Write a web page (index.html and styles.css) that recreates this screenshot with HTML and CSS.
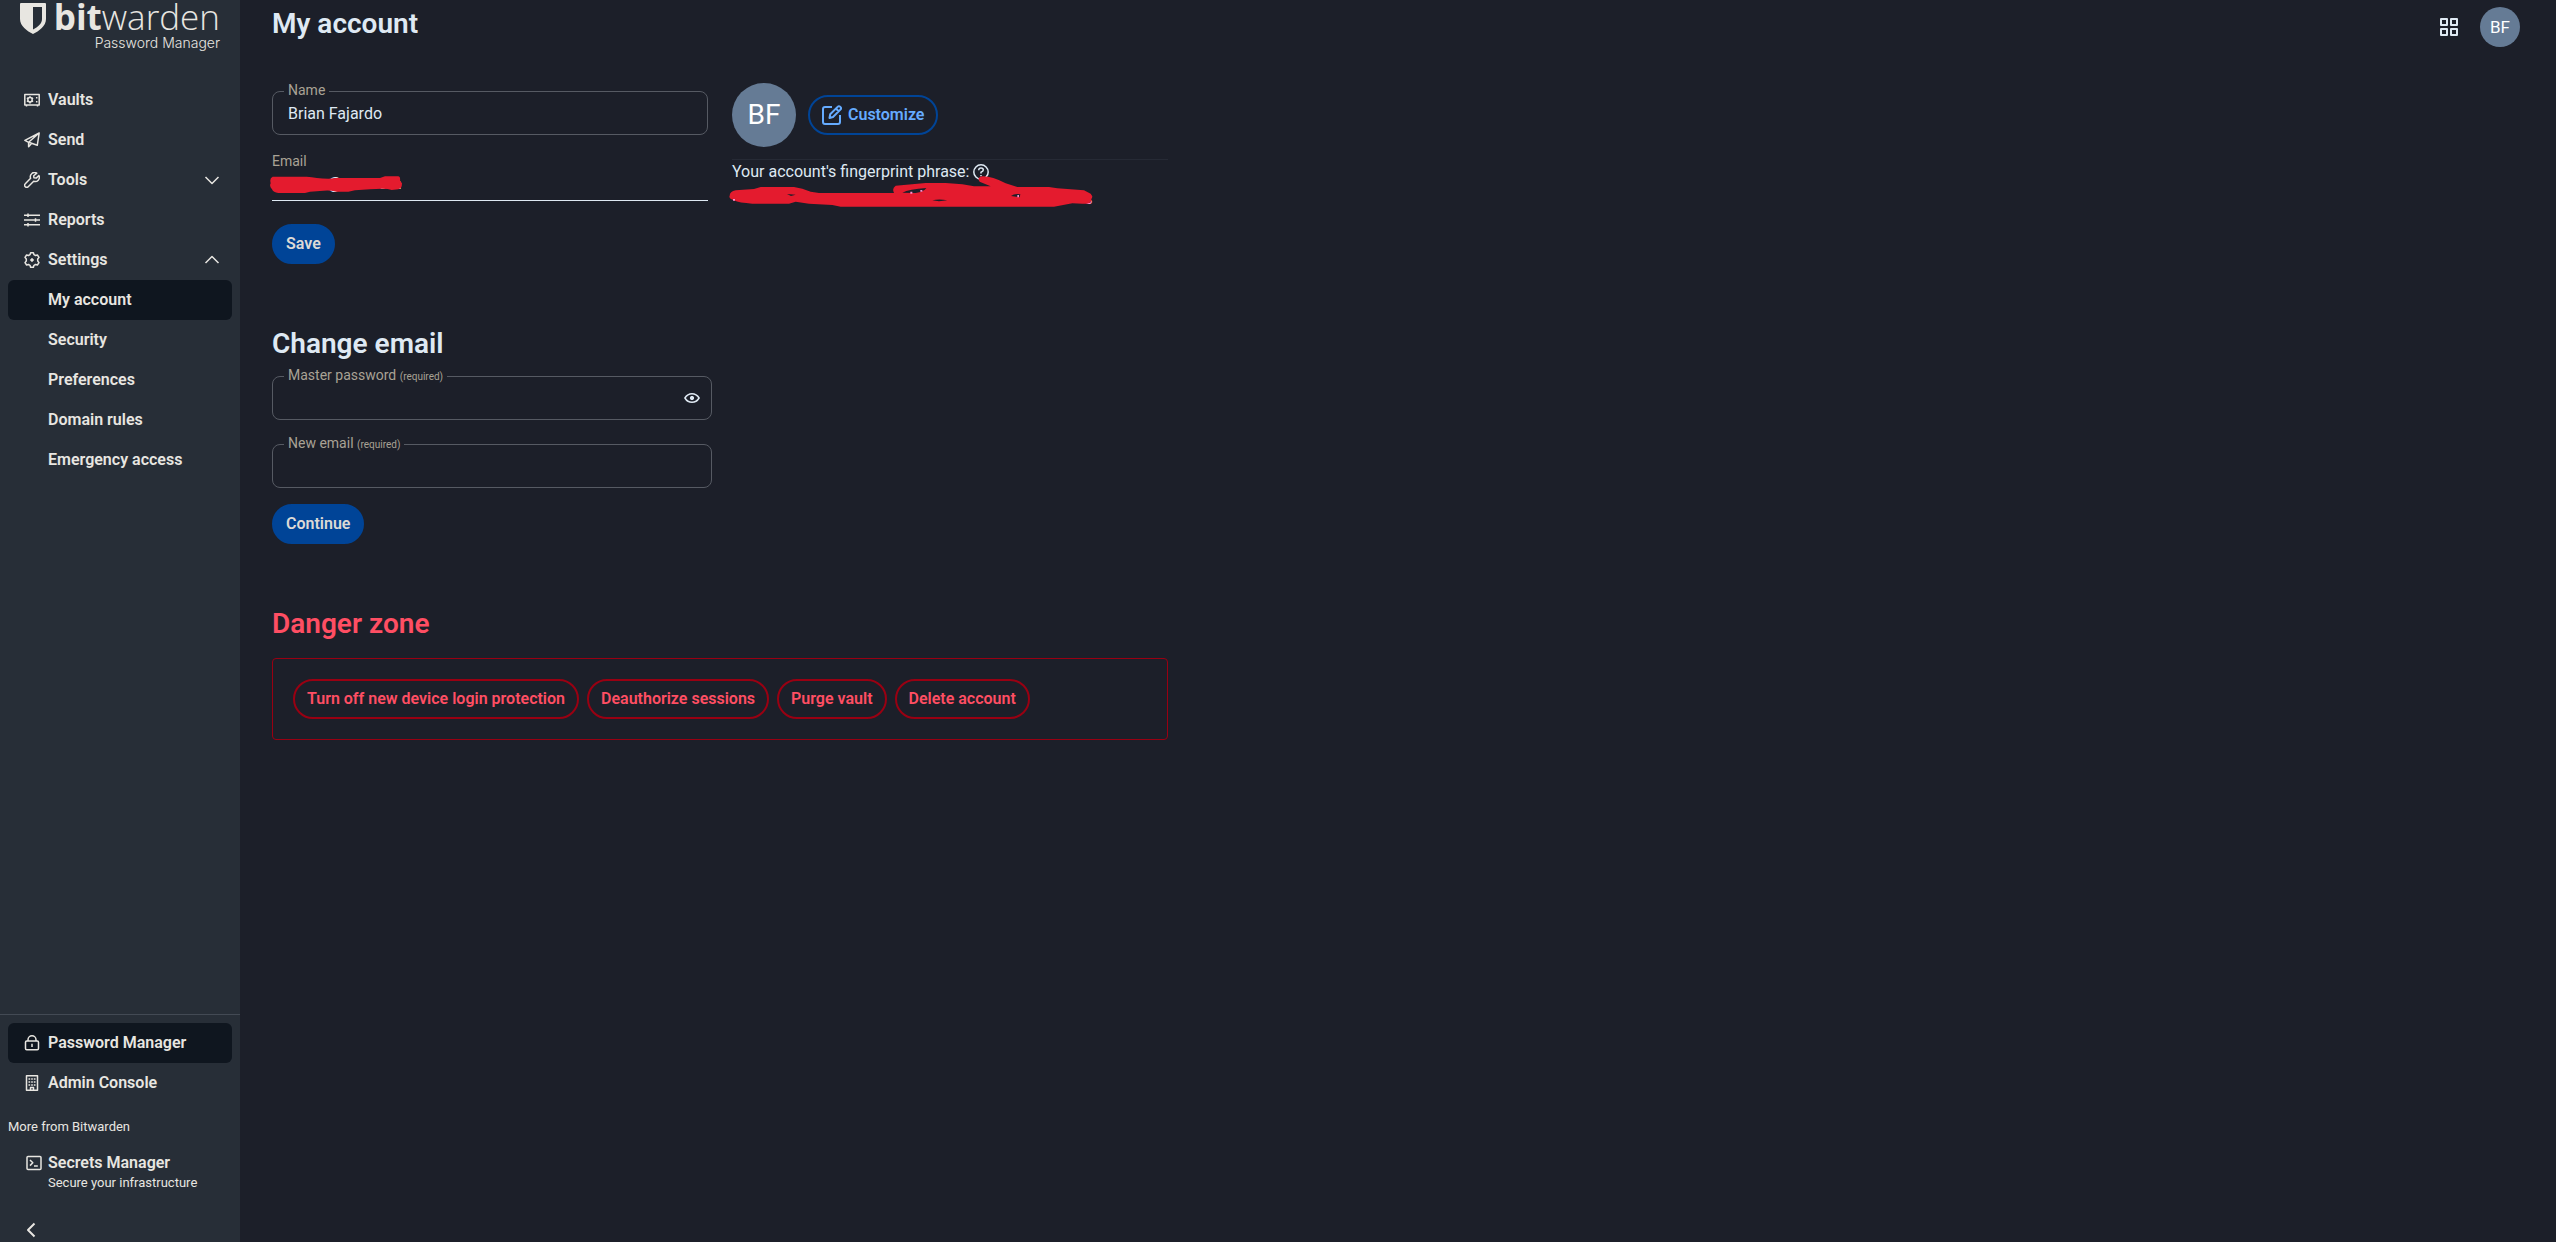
FILE: index.html
```html
<!DOCTYPE html>
<html lang="en">
<head>
  <meta charset="UTF-8">
  <meta name="viewport" content="width=device-width, initial-scale=1.0">
  <title>My account | Bitwarden Web vault</title>
  <link rel="stylesheet" href="styles.css">
</head>
<body>
  <div class="layout">
    <!-- Side navigation -->
    <nav class="sidebar" aria-label="Main">
      <a class="logo" href="#">
        <span class="logo-row">
          <svg class="logo-shield" viewBox="0 0 26 31" aria-hidden="true">
            <path fill-rule="evenodd" d="M1 0H25Q26 0 26 1V16C26 23 19 28 13 31C7 28 0 23 0 16V1Q0 0 1 0ZM13 4V26.500C18 24 22 20.500 22 16V4Z"/>
          </svg>
          <span class="logo-name"><b>bit</b>warden</span>
        </span>
        <span class="logo-product">Password Manager</span>
      </a>

      <ul class="nav-list">
        <li><a class="nav-item" href="#">
          <svg class="icon" viewBox="0 0 16 16" aria-hidden="true"><path d="M.8 2.500H15.200V13H.8ZM2.500 13V14.500M13.500 13V14.500M12.700 5V6.500M12.700 9V10.500"/><circle cx="6" cy="7.800" r="2.200"/><path d="M6 4.200V5.600M6 10V11.400M2.900 6L4.100 6.700M7.900 8.900L9.100 9.600M2.900 9.600L4.100 8.900M7.900 6.700L9.100 6"/></svg>
          Vaults</a></li>
        <li><a class="nav-item" href="#">
          <svg class="icon" viewBox="0 0 16 16" aria-hidden="true"><path d="M15.200 1L.9 8.400L4.600 10.300L13.300 13.200ZM15.200 1L4.600 10.300V14.800L7.500 11.400"/></svg>
          Send</a></li>
        <li><a class="nav-item" href="#">
          <svg class="icon" viewBox="0 0 16 16" aria-hidden="true"><path d="M12.800 1.200A4.200 4.200 0 0 0 6.600 6.200L1.300 11.700A2 2 0 0 0 4.200 14.700L9.700 9.300A4.200 4.200 0 0 0 14.900 3.500L12.200 6.100L9.900 5.800L9.700 3.800Z"/></svg>
          Tools
          <svg class="icon chevron" viewBox="0 0 16 16" aria-hidden="true"><path d="M1.500 5L8 11.500L14.500 5"/></svg></a></li>
        <li><a class="nav-item" href="#">
          <svg class="icon" viewBox="0 0 16 16" aria-hidden="true"><path d="M0 3.200H16M0 8H16M0 12.800H16M4 1.500V4.900M11.500 6.300V9.700M4 11.100V14.500"/></svg>
          Reports</a></li>
        <li><a class="nav-item" href="#">
          <svg class="icon" viewBox="0 0 16 16" aria-hidden="true"><path d="M6.600 .8H9.400L10 2.700L11.500 3.500L13.400 3L15 5.400L13.700 7V9L15 10.600L13.400 13L11.500 12.500L10 13.300L9.400 15.200H6.600L6 13.300L4.500 12.500L2.600 13L1 10.600L2.300 9V7L1 5.400L2.600 3L4.500 3.500L6 2.700Z"/><circle class="solid" cx="8" cy="8" r="1.300"/></svg>
          Settings
          <svg class="icon chevron" viewBox="0 0 16 16" aria-hidden="true"><path d="M1.500 11L8 4.500L14.500 11"/></svg></a>
          <ul class="nav-list">
            <li><a class="nav-item nav-child active" href="#" aria-current="page">My account</a></li>
            <li><a class="nav-item nav-child" href="#">Security</a></li>
            <li><a class="nav-item nav-child" href="#">Preferences</a></li>
            <li><a class="nav-item nav-child" href="#">Domain rules</a></li>
            <li><a class="nav-item nav-child" href="#">Emergency access</a></li>
          </ul>
        </li>
      </ul>

      <div class="sidebar-bottom">
        <ul class="nav-list">
          <li><a class="nav-item active" href="#">
            <svg class="icon" viewBox="0 0 16 16" aria-hidden="true"><rect x="1.500" y="6" width="13" height="8.800" rx="1.200"/><path d="M4 6V4.800A4 4 0 0 1 12 4.800V6M8 8.700V12"/></svg>
            Password Manager</a></li>
          <li><a class="nav-item" href="#">
            <svg class="icon" viewBox="0 0 16 16" aria-hidden="true"><path d="M2.500 .8H13.500V15.200H2.500ZM4.500 4H6.200M7.200 4H8.800M9.800 4H11.500M4.500 7H6.200M7.200 7H8.800M9.800 7H11.500M4.500 10H6.200M7.200 10H8.800M9.800 10H11.500M6.500 15V12.500H9.500V15"/></svg>
            Admin Console</a></li>
        </ul>
        <span class="more-title">More from Bitwarden</span>
        <a class="more-item" href="#">
          <svg class="icon" viewBox="0 0 16 16" aria-hidden="true"><rect x="1" y="1.500" width="14" height="13" rx="1"/><path d="M4 5L6.800 7.800L4 10.600M8 11H11.800"/></svg>
          <span class="more-text">
            <span class="more-name">Secrets Manager</span>
            <span class="more-desc">Secure your infrastructure</span>
          </span>
        </a>
        <button class="collapse" type="button" aria-label="Toggle side navigation">
          <svg class="icon" viewBox="0 0 16 16" aria-hidden="true"><path d="M10.500 1.500L4 8L10.500 14.500"/></svg>
        </button>
      </div>
    </nav>

    <!-- Page content -->
    <main class="content">
      <header class="page-header">
        <h1>My account</h1>
        <div class="header-actions">
          <button class="icon-button" type="button" aria-label="Switch products">
            <svg class="icon grid-icon" viewBox="0 0 18 18" aria-hidden="true"><path d="M1 1H7V7H1ZM11 1H17V7H11ZM1 11H7V17H1ZM11 11H17V17H11Z"/></svg>
          </button>
          <button class="avatar avatar-small" type="button">BF</button>
        </div>
      </header>

      <div class="page-body">
        <!-- Profile -->
        <form class="profile">
          <div class="profile-column profile-fields">
            <div class="field">
              <label for="name">Name</label>
              <input type="text" id="name" value="Brian Fajardo">
            </div>
            <div class="field-readonly">
              <label for="email">Email</label>
              <input type="text" id="email" value="&nbsp;&nbsp;&nbsp;&nbsp;&nbsp;&nbsp;&nbsp;&nbsp;&nbsp;&nbsp;&nbsp;&nbsp;&nbsp;&nbsp;@&nbsp;&nbsp;&nbsp;&nbsp;&nbsp;&nbsp;.com" readonly>
              <svg class="scribble scribble-email" viewBox="0 0 396 54" aria-hidden="true">
                <path d="M8 2H110C130 4 150 8 175 8L200 6H330L345 1H385Q392 2 390 14L396 22Q396 38 385 40L365 42Q350 36 300 40L255 43L235 47H200Q180 42 160 44L120 47L105 51H25Q10 50 6 40Q-3 30 2 22Q-2 6 8 2Z"/>
              </svg>
            </div>
            <button class="button primary" type="submit">Save</button>
          </div>
          <div class="profile-column">
            <div class="avatar-row">
              <span class="avatar avatar-large">BF</span>
              <button class="button outline" type="button">
                <svg class="icon edit-icon" viewBox="0 0 20 20" aria-hidden="true"><path d="M10 2H3Q1 2 1 4V17Q1 19 3 19H16Q18 19 18 17V10"/><path d="M7.500 13L8.200 9.300L15.600 1.900A1.700 1.700 0 0 1 18.400 4.600L11 12ZM14 3.500L16.600 6.200"/></svg>
                Customize
              </button>
            </div>
            <div class="fingerprint">
              <p class="fingerprint-label">
                Your account's fingerprint phrase:
                <a class="help" href="#" aria-label="Learn about fingerprint phrase">
                  <svg class="icon" viewBox="0 0 16 16" aria-hidden="true"><circle cx="8" cy="8" r="7.200"/><path d="M5.700 6.200Q5.800 4 8 4Q10.300 4 10.300 6Q10.300 7.200 8 8.300V9.500M8 11V12.300"/></svg>
                </a>
              </p>
              <code class="fingerprint-code">s</code>
              <svg class="scribble scribble-code" viewBox="0 0 1092 99" aria-hidden="true">
                <path fill-rule="evenodd" d="M2 62Q2 50 20 46L75 42L95 36H195Q220 40 245 50L270 54H495Q488 40 500 32L590 24H650L700 28L735 34L785 34L752 20Q742 6 762 4Q790 4 830 25L865 36H960L985 40L1065 46L1085 56L1090 64L1085 80Q1080 88 1060 86L1030 85L975 95H335L310 90L240 86L200 80L180 86H70Q30 84 15 76Q-2 72 2 62ZM520 53Q540 42 592 39Q585 50 560 54ZM846 63Q856 55 874 58L872 67ZM610 76Q630 71 655 76L630 79ZM174 57L200 59L186 63Z"/>
                <path class="speck" d="M544 50h6v6h-6ZM574 45h6v5h-6ZM865 60h5v7h-5ZM12 72h6v5h-6Z"/>
              </svg>
            </div>
          </div>
        </form>

        <!-- Change email -->
        <section class="section">
          <h2>Change email</h2>
          <form class="email-form">
            <div class="field">
              <label for="masterPassword">Master password <small>(required)</small></label>
              <input type="password" id="masterPassword">
              <button class="icon-button toggle-password" type="button" aria-label="Toggle visibility">
                <svg class="icon" viewBox="0 0 16 16" aria-hidden="true"><path d="M.9 8Q3.500 3.700 8 3.700T15.100 8Q12.500 12.300 8 12.300T.9 8Z"/><circle class="solid" cx="8" cy="8" r="1.700"/></svg>
              </button>
            </div>
            <div class="field">
              <label for="newEmail">New email <small>(required)</small></label>
              <input type="text" id="newEmail">
            </div>
            <button class="button primary" type="submit">Continue</button>
          </form>
        </section>

        <!-- Danger zone -->
        <section class="section">
          <h2 class="danger-title">Danger zone</h2>
          <div class="danger-box">
            <button class="button danger" type="button">Turn off new device login protection</button>
            <button class="button danger" type="button">Deauthorize sessions</button>
            <button class="button danger" type="button">Purge vault</button>
            <button class="button danger" type="button">Delete account</button>
          </div>
        </section>
      </div>
    </main>
  </div>
</body>
</html>
```
FILE: styles.css
```css
/* General Styling */
* {
  box-sizing: border-box;
}

body {
  margin: 0;
  font-family: Roboto, sans-serif;
  font-size: 16px;
  line-height: 24px;
  background-color: #1c1f29;
  color: #dfe9f3;
}

h1,
h2 {
  margin: 0;
  font-size: 28px;
  line-height: 36px;
  font-weight: 600;
}

a {
  color: inherit;
  text-decoration: none;
}

button,
input {
  font: inherit;
  color: inherit;
}

button {
  cursor: pointer;
}

.layout {
  display: flex;
  min-height: 100vh;
}

/* Icons */
.icon {
  width: 16px;
  height: 16px;
  flex-shrink: 0;
  fill: none;
  stroke: currentColor;
  stroke-width: 1.5;
  stroke-linejoin: round;
}

.icon .solid {
  fill: currentColor;
  stroke-width: 1;
}

/* Sidebar */
.sidebar {
  display: flex;
  flex-direction: column;
  width: 240px;
  flex-shrink: 0;
  background-color: #272e37;
  color: #e8e6e1;
}

.logo {
  display: flex;
  flex-direction: column;
  height: 80px;
  padding: 0 20px;
}

.logo-row {
  display: flex;
  justify-content: space-between;
  height: 35px;
}

.logo-shield {
  width: 26px;
  height: 31px;
  margin-top: 3px;
  fill: currentColor;
}

.logo-name {
  font-family: "Open Sans", sans-serif;
  font-size: 35px;
  line-height: 33px;
  font-weight: 300;
}

.logo-name b {
  font-weight: 700;
}

.logo-product {
  font-family: Inter, sans-serif;
  font-size: 14px;
  line-height: 16px;
  font-weight: 300;
  text-align: right;
}

.nav-list {
  margin: 0;
  padding: 0;
  list-style: none;
}

.nav-item {
  display: flex;
  align-items: center;
  gap: 8px;
  height: 40px;
  margin: 0 8px;
  padding: 0 12px 0 16px;
  border-radius: 6px;
  font-weight: 600;
}

.nav-child {
  padding-left: 40px;
}

.nav-item.active {
  background-color: #0f161f;
}

.chevron {
  margin-left: auto;
}

.sidebar-bottom {
  display: flex;
  flex-direction: column;
  margin-top: auto;
  padding-top: 8px;
  border-top: 1px solid #434a54;
}

.more-title {
  margin: 12px 8px;
  font-size: 13px;
}

.more-item {
  display: flex;
  gap: 6px;
  padding: 0 26px;
}

.more-item .icon {
  margin-top: 4px;
}

.more-text {
  display: flex;
  flex-direction: column;
}

.more-name {
  font-weight: 600;
}

.more-desc {
  font-size: 13px;
  line-height: 16px;
}

.collapse {
  display: flex;
  align-items: center;
  height: 24px;
  margin-top: 27px;
  padding: 0 24px;
  border: none;
  background: none;
}

.collapse .icon {
  stroke-width: 2;
}

/* Page header */
.content {
  flex: 1;
  min-width: 0;
}

.page-header {
  display: flex;
  justify-content: space-between;
  align-items: flex-start;
  padding: 6px 36px 0 32px;
}

.header-actions {
  display: flex;
  align-items: center;
  gap: 22px;
  padding-top: 1px;
}

.icon-button {
  display: flex;
  padding: 4px;
  border: none;
  background: none;
}

.header-actions .icon-button {
  padding: 0;
}

.grid-icon {
  width: 18px;
  height: 18px;
  stroke-width: 2;
}

.avatar {
  display: flex;
  align-items: center;
  justify-content: center;
  border: none;
  border-radius: 50%;
  background-color: #657b95;
  color: #fff;
}

.avatar-small {
  width: 40px;
  height: 40px;
  padding: 0;
  font-size: 17px;
}

.avatar-large {
  width: 64px;
  height: 64px;
  font-size: 28px;
}

/* Page body */
.page-body {
  max-width: 960px;
  padding: 36px 32px;
}

.section {
  margin-top: 62px;
}

.profile {
  display: grid;
  grid-template-columns: 1fr 1fr;
  gap: 24px;
}

.profile-fields {
  padding-top: 8px;
}

/* Fields */
.field {
  position: relative;
}

.field label {
  position: absolute;
  top: -11px;
  left: 12px;
  padding: 0 4px;
  background-color: #1c1f29;
}

.field label,
.field-readonly label {
  font-size: 14px;
  line-height: 20px;
  color: #a9a295;
}

.field small {
  font-size: 10px;
}

.field input {
  display: block;
  width: 100%;
  height: 44px;
  padding: 4px 15px;
  border: 1px solid #565a63;
  border-radius: 8px;
  background: none;
}

.toggle-password {
  position: absolute;
  top: 10px;
  right: 8px;
}

.field-readonly {
  position: relative;
  margin: 16px 0 23px;
}

.field-readonly label,
.field-readonly input {
  display: block;
}

.field-readonly input {
  width: 100%;
  height: 30px;
  padding: 0 0 4px;
  border: none;
  border-bottom: 1px solid #dfe9f3;
  background: none;
}

/* Buttons */
.button {
  display: inline-flex;
  align-items: center;
  gap: 6px;
  height: 40px;
  padding: 0 12px;
  border: 2px solid transparent;
  border-radius: 20px;
  background: none;
  font-weight: 600;
}

.primary {
  border-color: #004497;
  background-color: #004497;
  color: #dcdad6;
}

.outline {
  border-color: #004497;
  color: #65abff;
}

.danger {
  border-color: #990012;
  color: #ff4e63;
}

.edit-icon {
  width: 20px;
  height: 20px;
  stroke-width: 2;
}

/* Fingerprint phrase */
.avatar-row {
  display: flex;
  align-items: center;
  gap: 12px;
  padding-bottom: 12px;
  border-bottom: 1px solid #262a35;
}

.fingerprint {
  position: relative;
}

.fingerprint-label {
  display: flex;
  align-items: center;
  gap: 4px;
  margin: 0 0 4px;
}

.help {
  display: flex;
}

.fingerprint-code {
  display: block;
  width: 361px;
  font-family: "Liberation Mono", monospace;
  font-size: 14px;
  text-align: right;
  color: #ff8fd0;
}

/* Marker strokes over private values */
.scribble {
  position: absolute;
  fill: #e41b2e;
}

.scribble-email {
  top: 25px;
  left: -2px;
  width: 132px;
  height: 18px;
}

.scribble-code {
  top: 15px;
  left: -3px;
  width: 364px;
  height: 33px;
}

.scribble .speck {
  fill: #ff8fd0;
}

/* Change email */
.email-form {
  display: flex;
  flex-direction: column;
  align-items: flex-start;
  gap: 24px;
  max-width: 440px;
  margin-top: 14px;
}

.email-form .field {
  width: 100%;
}

.email-form .field + .button {
  margin-top: -8px;
}

/* Danger zone */
.danger-title {
  color: #ff4e63;
}

.danger-box {
  display: flex;
  flex-wrap: wrap;
  gap: 8px;
  margin-top: 16px;
  padding: 20px;
  border: 1px solid #990012;
  border-radius: 4px;
}
```
